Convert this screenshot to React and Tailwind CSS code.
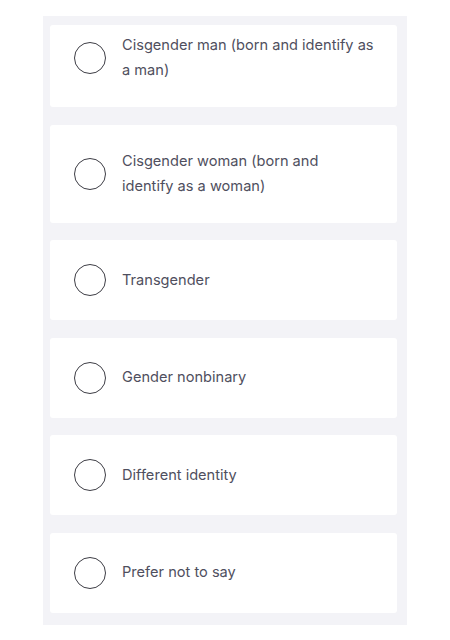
import React from 'react'

const options = [
  { lines: ['Cisgender man (born and identify as', 'a man)'], pad: 'pt-[8px] pb-[24px]' },
  { lines: ['Cisgender woman (born and', 'identify as a woman)'], pad: 'py-[24px]' },
  { lines: ['Transgender'], pad: 'py-6' },
  { lines: ['Gender nonbinary'], pad: 'py-6' },
  { lines: ['Different identity'], pad: 'py-6' },
  { lines: ['Prefer not to say'], pad: 'py-6' },
]

function Option({ lines, pad }){
  return (
    <label className={`flex items-center gap-4 bg-white rounded-[3px] pl-6 pr-4 cursor-pointer ${pad}`}>
      <span className="w-8 h-8 shrink-0 rounded-full border border-[#3d3d45] bg-white"></span>
      <span className="text-[14.6px] leading-[25px] text-[#4f4f5e]">
        {lines.map((l, i) => <span key={i} className="block whitespace-nowrap">{l}</span>)}
      </span>
    </label>
  )
}

export default function App(){
  return (
    <div className="min-h-[640px] bg-white pt-4" style={{fontFamily: 'Inter, "Noto Sans", sans-serif'}}>
      <div className="ml-[43px] w-[364px] bg-[#f3f3f7] pl-[7px] pr-[10px] pt-[9px] pb-[12px] flex flex-col gap-[17.6px]">
        {options.map(o => <Option key={o.lines[0]} lines={o.lines} pad={o.pad} />)}
      </div>
    </div>
  )
}
